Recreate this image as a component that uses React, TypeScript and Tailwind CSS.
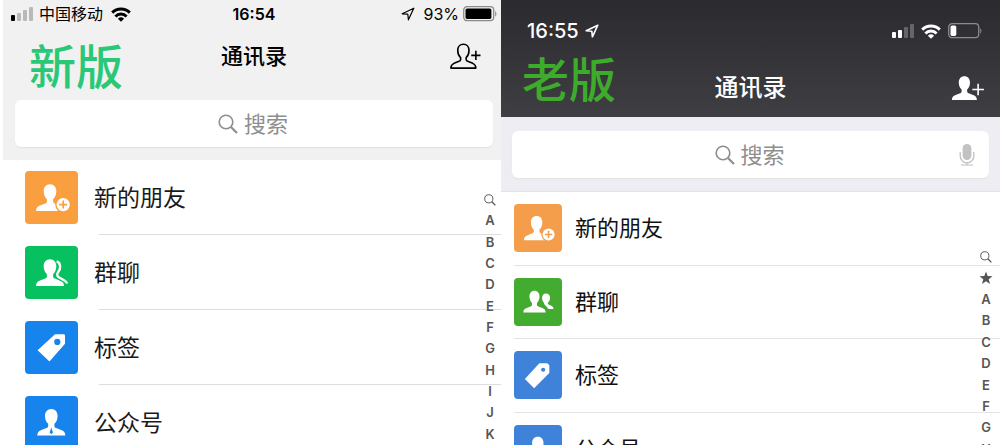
import type { ReactNode } from "react";
import clsx from "clsx";

const PERSON =
  "M25 13.3c-4 0-6.3 3-6.3 7 0 3.6 1.4 6.4 3.2 7.9v2.2c0 1.3-1 1.8-2.4 2.3l-5 2c-2.3 1-3.5 2.4-3.5 5.3h28c0-2.9-1.2-4.3-3.5-5.3l-5-2c-1.4-.5-2.4-1-2.4-2.3v-2.2c1.8-1.5 3.2-4.3 3.2-7.9 0-4-2.3-7-6.3-7z";

const CJK = "font-['Inter','Noto_Sans_CJK_SC',sans-serif]";

function SignalBars({ active, className, dim }: { active: number; className: string; dim: string }) {
  return (
    <svg viewBox="0 0 22 14" className={clsx("h-3.5 w-[22px]", className)} aria-hidden="true">
      {[6, 8, 11, 14].map((h, i) => (
        <rect
          key={h}
          x={i * 6}
          y={14 - h}
          width="4"
          height={h}
          rx="1"
          className={i < active ? "fill-current" : dim}
        />
      ))}
    </svg>
  );
}

function WifiIcon() {
  return (
    <svg viewBox="0 0 20 15" className="h-[15px] w-5" fill="none" stroke="currentColor" strokeWidth="2.9" aria-hidden="true">
      <path d="M1.2 5.6a12.5 12.5 0 0 1 17.6 0" />
      <path d="M4.4 9.4a7.8 7.8 0 0 1 11.2 0" />
      <path d="M10 14.8l-3.1-3.1a4.5 4.5 0 0 1 6.2 0z" fill="currentColor" stroke="none" />
    </svg>
  );
}

function LocationIcon({ weight }: { weight: number }) {
  return (
    <svg viewBox="0 0 14 14" className="size-3.5" fill="none" stroke="currentColor" strokeWidth={weight} strokeLinejoin="round" aria-hidden="true">
      <path d="M12.8 1.2L1.2 6.8l5.6.4.6 5.6z" />
    </svg>
  );
}

function Battery({ level, className }: { level: number; className: string }) {
  return (
    <svg viewBox="0 0 34 16" className={className} aria-hidden="true">
      <rect x=".7" y=".7" width="30" height="14" rx="3.4" fill="none" stroke="#8b8b8d" strokeWidth="1.3" />
      <rect x="2.5" y="2.5" width={26.4 * level} height="10.4" rx="1.6" fill="currentColor" />
      <path d="M32.2 5.2c1.6.6 1.6 4.6 0 5.2z" fill="#8b8b8d" />
    </svg>
  );
}

function SearchIcon({ className }: { className: string }) {
  return (
    <svg viewBox="0 0 20 20" className={className} fill="none" stroke="currentColor" aria-hidden="true">
      <circle cx="8" cy="8" r="6.8" strokeWidth="1.6" />
      <path d="M13 13l6 6" strokeWidth="2.2" />
    </svg>
  );
}

function MicIcon() {
  return (
    <svg viewBox="0 0 16 24" className="h-6 w-4" aria-hidden="true">
      <rect x="3.6" y="1" width="8.8" height="16" rx="4.4" fill="#c2c2c2" />
      <path d="M1.2 9v4a6.8 6.8 0 0 0 13.6 0V9M8 19.8v2M2 22h12" fill="none" stroke="#bdbdbd" strokeWidth="1.2" />
    </svg>
  );
}

function AddFriendIcon({ outlined }: { outlined?: boolean }) {
  return (
    <svg viewBox="10 12 37 30" className="h-[27px] w-[33px]" aria-hidden="true">
      <path
        d={PERSON}
        fill={outlined ? "none" : "currentColor"}
        stroke={outlined ? "currentColor" : "none"}
        strokeWidth="1.8"
        strokeLinejoin="round"
      />
      {outlined ? (
        <path d="M39 20.5v10.4M33.8 25.7h10.4" stroke="currentColor" strokeWidth="1.8" />
      ) : (
        <path d="M40.4 21.6v13M33.9 28.1h13" stroke="currentColor" strokeWidth="1.8" />
      )}
    </svg>
  );
}

function Tile({ className, children }: { className: string; children: ReactNode }) {
  return (
    <span className={clsx("shrink-0 overflow-hidden rounded-sm text-white", className)}>
      <svg viewBox="0 0 53 53" className="size-full" fill="currentColor" aria-hidden="true">
        {children}
      </svg>
    </span>
  );
}

function NewFriendGlyph({ color }: { color: string }) {
  return (
    <>
      <path d={PERSON} />
      <circle cx="38.2" cy="33.6" r="8" fill={color} />
      <circle cx="38.2" cy="33.6" r="6.6" />
      <path d="M38.2 29.6v8M34.2 33.6h8" stroke={color} strokeWidth="1.7" />
    </>
  );
}

const SHADOW_PERSON =
  "M31.6 15.4c4.4 1.4 4.6 7.4 1.2 11.4-1.1 1.6-.7 3.4 1 4.4l4.4 2.5c2.2 1.2 3.4 2 3.9 3.8";

function OutlineGroupGlyph() {
  return (
    <>
      <path d={PERSON} />
      <path d={SHADOW_PERSON} fill="none" stroke="#07c160" strokeWidth="4.6" />
      <path d={SHADOW_PERSON} fill="none" stroke="currentColor" strokeWidth="2.4" />
    </>
  );
}

function SolidGroupGlyph() {
  return (
    <>
      <path d="M35.4 17c-2.8 0-4.4 2.2-4.4 5 0 2.4 1 4.4 2.2 5.4v1.4l5 5.3h5.4c0-2-.8-2.8-2.4-3.5l-2.6-1.1c-.9-.4-1.3-.8-1.3-1.5v-.8c1.4-1 2.5-2.8 2.5-5.2 0-2.8-1.6-5-4.4-5z" />
      <g transform="translate(.6 2.2) scale(.88 .9)">
        <path d={PERSON} stroke="#43ab2f" strokeWidth="3" />
        <path d={PERSON} />
      </g>
    </>
  );
}

function OfficialGlyph({ color }: { color: string }) {
  return (
    <>
      <path d={PERSON} transform="translate(1.3 -.4)" />
      <path d="M26.3 31.5l-1.7 5.1 1.7 1.7 1.7-1.7z" fill={color} />
    </>
  );
}

type Entry = { label: string; tile: string; glyph: ReactNode };

const newEntries: Entry[] = [
  { label: "新的朋友", tile: "bg-[#fa9f3f]", glyph: <NewFriendGlyph color="#fa9f3f" /> },
  { label: "群聊", tile: "bg-[#07c160]", glyph: <OutlineGroupGlyph /> },
  {
    label: "标签",
    tile: "bg-[#1784ee]",
    glyph: (
      <path
        fillRule="evenodd"
        d="M30 13.2h8.6q1.4 0 1.4 1.4v8.2L24.5 40.5 12.6 29.2zM32.3 17.8a3.1 3.1 0 1 0 0 6.2 3.1 3.1 0 0 0 0-6.2z"
      />
    ),
  },
  { label: "公众号", tile: "bg-[#1784ee]", glyph: <OfficialGlyph color="#1784ee" /> },
];

const oldEntries: Entry[] = [
  { label: "新的朋友", tile: "bg-[#f49d4b]", glyph: <NewFriendGlyph color="#f49d4b" /> },
  { label: "群聊", tile: "bg-[#43ab2f]", glyph: <SolidGroupGlyph /> },
  {
    label: "标签",
    tile: "bg-[#3f82d9]",
    glyph: (
      <path
        fillRule="evenodd"
        d="M28 13.6h8.8l2.2 2.2v8.4L22.2 41.2 12 30.8zM32.2 18.4a2.3 2.3 0 1 0 0 4.6 2.3 2.3 0 0 0 0-4.6z"
      />
    ),
  },
  { label: "公众号", tile: "bg-[#3f82d9]", glyph: <OfficialGlyph color="#3f82d9" /> },
];

function IndexBar({ items, className }: { items: string[]; className: string }) {
  return (
    <nav
      aria-label="索引"
      className={clsx("absolute flex w-5 flex-col text-[13px] font-semibold text-[#555]", className)}
    >
      {items.map((item) => (
        <a key={item} href={`#${item}`} aria-label={item} className="flex flex-1 items-center justify-center leading-none">
          {item === "search" && <SearchIcon className="size-3" />}
          {item === "star" && (
            <svg viewBox="0 0 14 14" className="size-3.5" fill="currentColor" aria-hidden="true">
              <path d="M7 .6l1.7 4.5 4.8.2-3.8 3 1.3 4.7L7 10.3 3 13l1.3-4.7-3.8-3 4.8-.2z" />
            </svg>
          )}
          {item.length === 1 && item}
        </a>
      ))}
    </nav>
  );
}

function SearchField({ id, children }: { id: string; children?: ReactNode }) {
  return (
    <div className="grid h-[47px] grid-cols-[1fr_auto_1fr] items-center rounded-md bg-white px-3.5 text-[#8e8e8e] shadow-[0_1px_1px_#e2e2e2]">
      <label htmlFor={id} className="col-start-2 flex items-center gap-1.5">
        <SearchIcon className="size-5" />
        <input
          id={id}
          type="text"
          placeholder="搜索"
          aria-label="搜索"
          className="w-[46px] bg-transparent text-[22px] leading-8 outline-none placeholder:text-[#8e8e8e]"
        />
      </label>
      {children}
    </div>
  );
}

function NewVersion() {
  return (
    <section className="relative ml-[3px] min-w-0 bg-white">
      <header className="bg-[#f1f1f1] pr-2 pb-[13px] pl-3 text-black">
        <div className="-ml-1 -mr-1 grid h-7 grid-cols-[1fr_auto_1fr] items-center text-base leading-5">
          <div className="flex items-center">
            <SignalBars active={1} className="mr-1.5" dim="fill-[#b9b9b9]" />
            <span className="mr-2">中国移动</span>
            <WifiIcon />
          </div>
          <time className="font-semibold">16:54</time>
          <div className="flex items-center justify-end">
            <LocationIcon weight={1.2} />
            <span className="mr-1 ml-2">93%</span>
            <Battery level={0.98} className="h-4 w-[34px]" />
          </div>
        </div>
        <div className="grid h-[72px] grid-cols-[1fr_auto_1fr]">
          <span className="pt-[15px] pl-3.5 text-[47px] leading-[48px] font-medium text-[#2ac876]">新版</span>
          <h1 className="pt-3 text-[22px] leading-8 font-medium">通讯录</h1>
          <button type="button" aria-label="添加朋友" className="mt-3.5 mr-2.5 h-7 justify-self-end">
            <AddFriendIcon outlined />
          </button>
        </div>
        <SearchField id="search-new" />
      </header>
      <ul>
        {newEntries.map((entry) => (
          <li key={entry.label} className="relative flex h-[75px] items-center">
            <a href={`#${entry.label}`} className="flex items-center gap-4 pl-[22px] text-[23px] leading-8 text-[#1a1a1a]">
              <Tile className={clsx("size-[53px]", entry.tile)}>{entry.glyph}</Tile>
              {entry.label}
            </a>
            <span className="absolute right-0 bottom-0 left-24 border-b border-[#dedede]" />
          </li>
        ))}
      </ul>
      <IndexBar
        items={["search", ..."ABCDEFGHIJK"]}
        className="top-[189px] right-px h-64"
      />
    </section>
  );
}

function OldVersion() {
  return (
    <section className="relative min-w-0 bg-white">
      <header className="bg-linear-to-b from-[#2b2a2f] to-[#3f3e43] px-[18px] pt-[18px] text-white">
        <div className="flex h-[26px] items-center justify-between pl-2">
          <div className="flex items-center gap-1.5 text-xl leading-6 font-medium">
            <time>16:55</time>
            <LocationIcon weight={1.6} />
          </div>
          <div className="flex items-center gap-[7px]">
            <SignalBars active={2} className="text-white" dim="fill-[#66656a]" />
            <WifiIcon />
            <Battery level={0.22} className="h-4 w-[34px]" />
          </div>
        </div>
        <div className="grid h-[73px] grid-cols-[1fr_auto_1fr]">
          <span className="pt-3 pl-[3px] text-[47px] leading-[48px] font-medium text-[#3dac2b]">老版</span>
          <h1 className="pt-7 text-[24px] leading-8 font-medium">通讯录</h1>
          <button type="button" aria-label="添加朋友" className="-mr-0.5 mt-[30px] h-7 justify-self-end">
            <AddFriendIcon />
          </button>
        </div>
      </header>
      <div className="border-b border-[#e3e3e6] bg-[#eeedf3] px-[11px] pt-3.5 pb-[13px]">
        <SearchField id="search-old">
          <button type="button" aria-label="语音搜索" className="justify-self-end">
            <MicIcon />
          </button>
        </SearchField>
      </div>
      <ul className="flex h-[294px] flex-col">
        {oldEntries.map((entry) => (
          <li key={entry.label} className="ml-[13px] flex flex-1 items-center border-b border-[#e4e4e4]">
            <a href={`#${entry.label}`} className="flex items-center gap-[13px] text-[22px] leading-8 text-[#111]">
              <Tile className={clsx("size-12", entry.tile)}>{entry.glyph}</Tile>
              {entry.label}
            </a>
          </li>
        ))}
      </ul>
      <IndexBar
        items={["search", "star", ..."ABCDEFGH"]}
        className="top-[246px] right-1 h-[214px]"
      />
    </section>
  );
}

export default function App() {
  return (
    <main className={clsx("grid h-screen grid-cols-[501fr_499fr] overflow-hidden bg-white", CJK)}>
      <NewVersion />
      <OldVersion />
    </main>
  );
}
